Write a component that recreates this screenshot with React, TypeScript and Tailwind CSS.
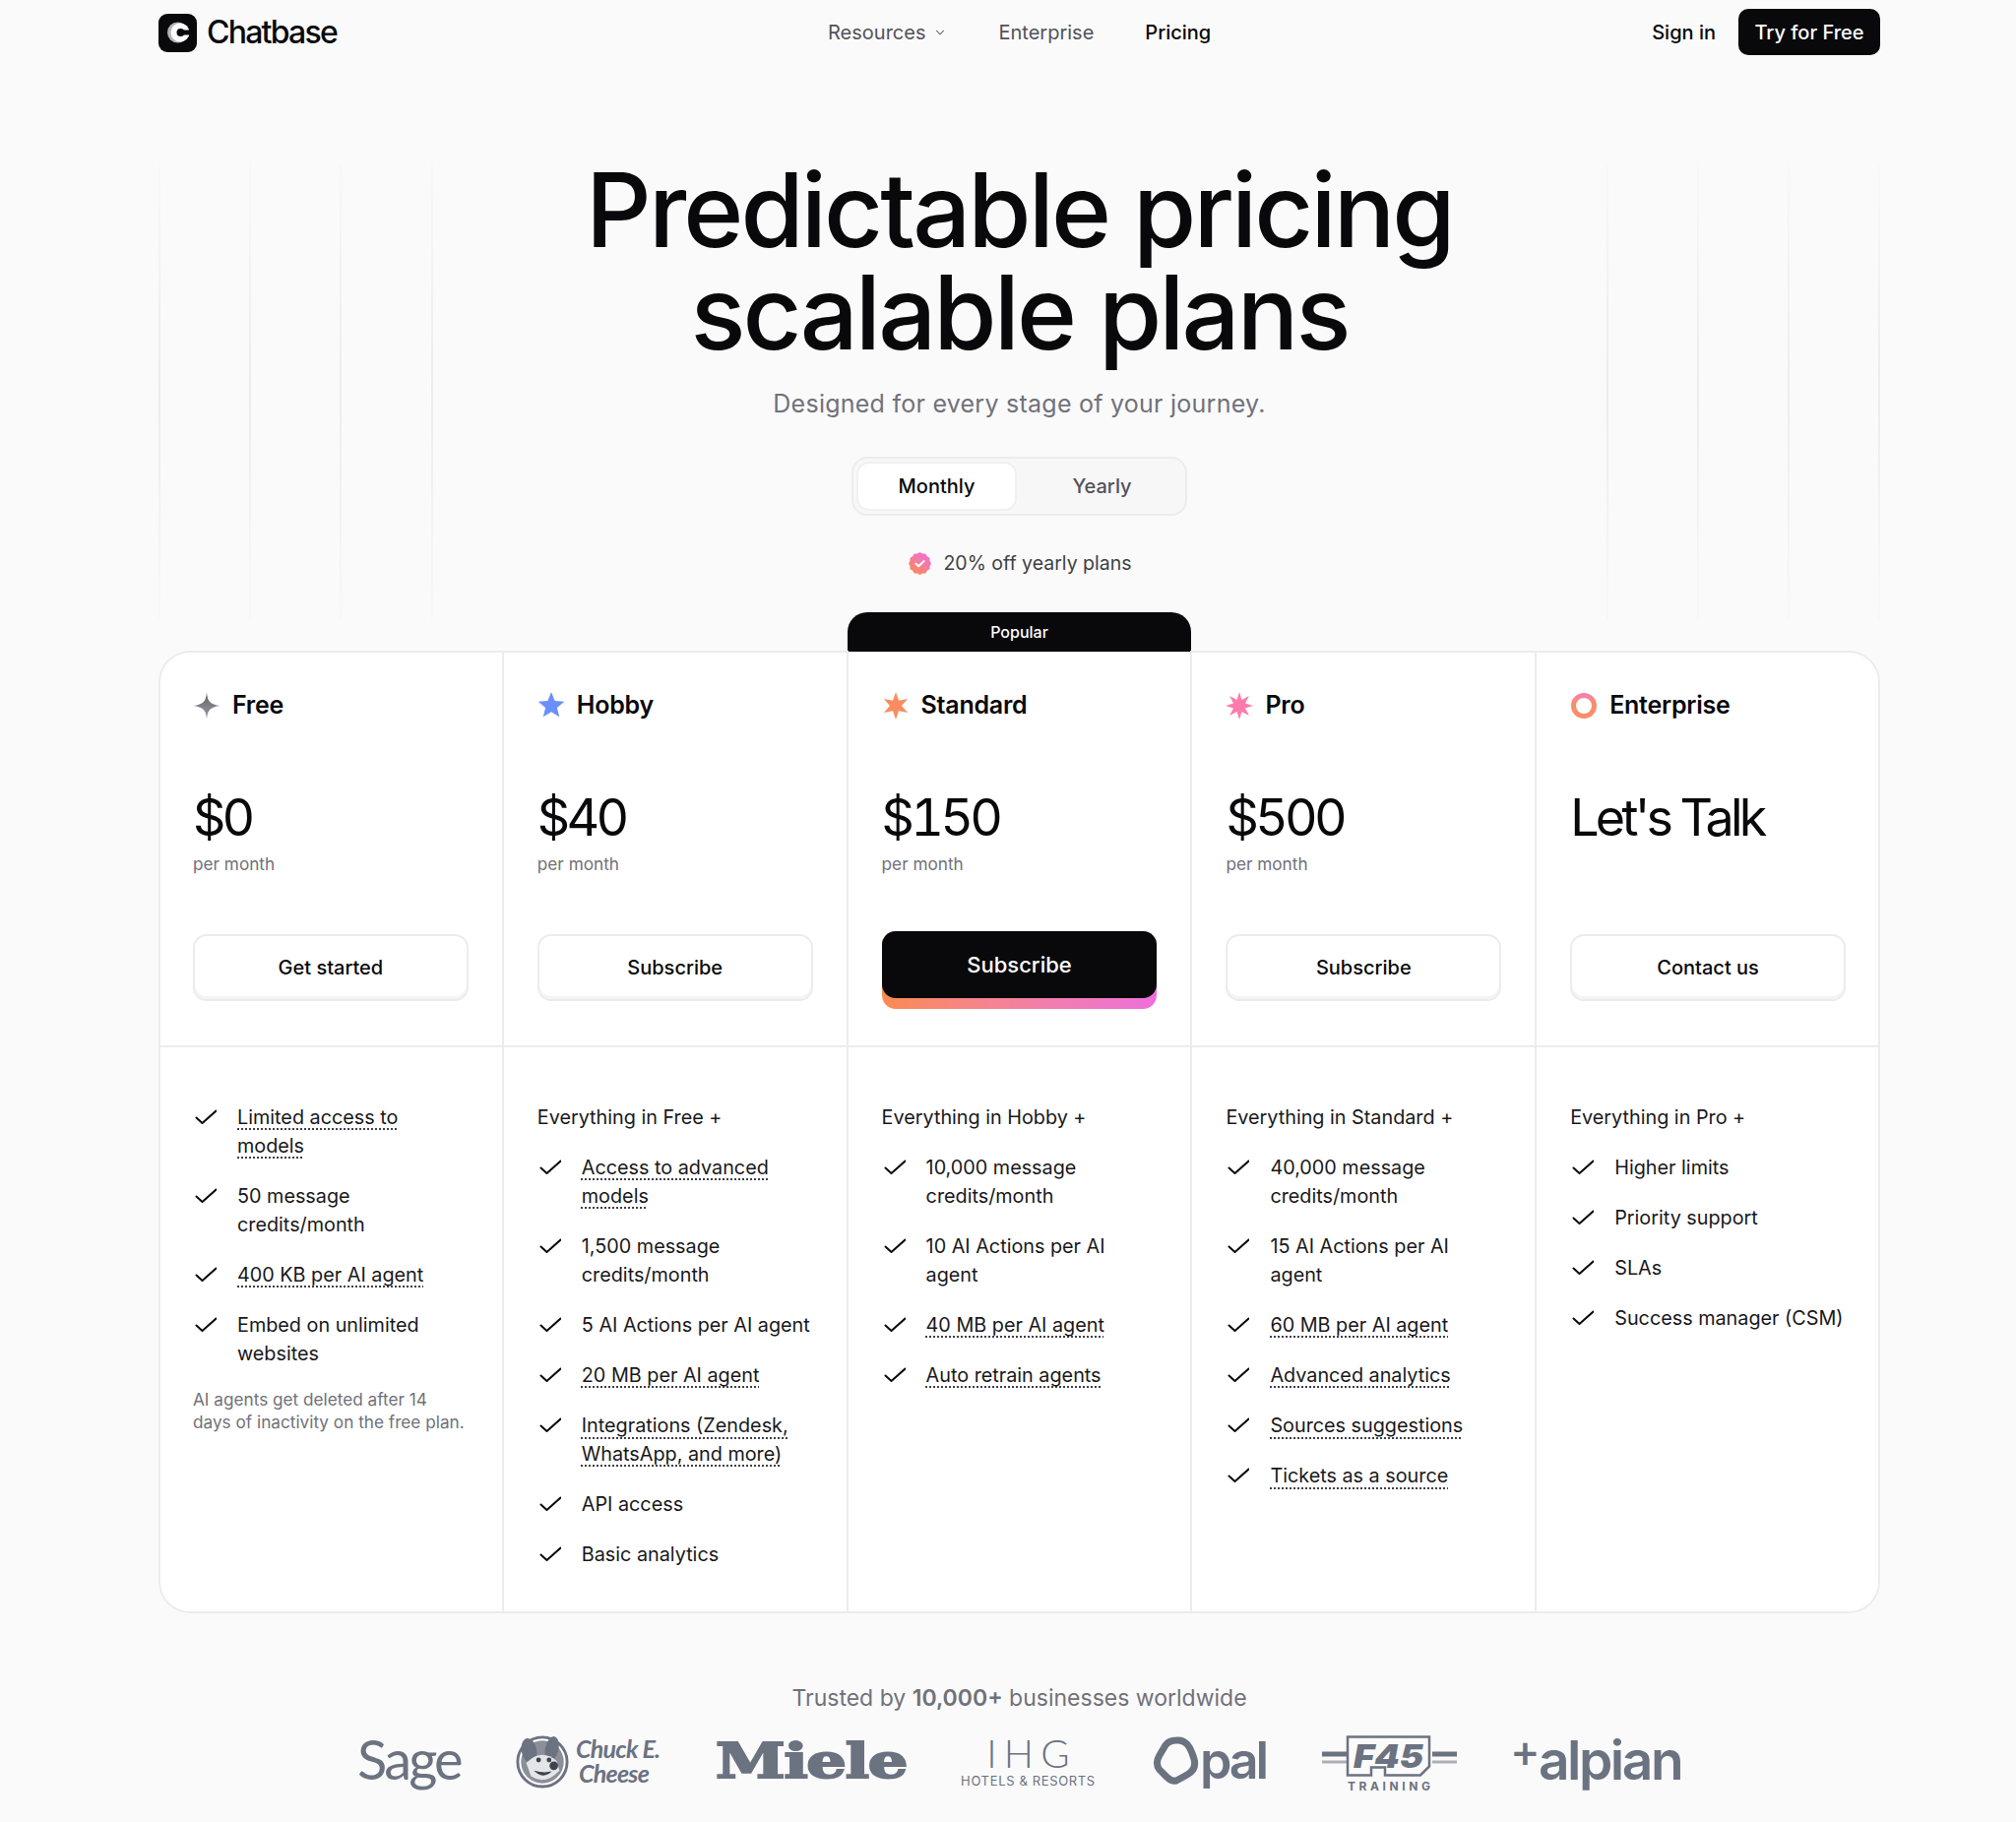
import { ChevronDown } from "lucide-react";

type Feature = { text: string; dotted?: boolean };

type Plan = {
  name: string;
  icon: React.ReactNode;
  price: string;
  perMonth: boolean;
  cta: string;
  popular?: boolean;
  lead?: string;
  features: Feature[];
  note?: string;
};

function starPoints(n: number, outer: number, inner: number) {
  const pts: string[] = [];
  for (let i = 0; i < n * 2; i++) {
    const r = i % 2 === 0 ? outer : inner;
    const a = (Math.PI * i) / n - Math.PI / 2;
    pts.push(`${(14 + r * Math.cos(a)).toFixed(2)},${(14 + r * Math.sin(a)).toFixed(2)}`);
  }
  return pts.join(" ");
}

function FreeIcon() {
  return (
    <svg width="28" height="28" viewBox="0 0 28 28">
      <defs>
        <linearGradient id="free-grad" x1="0" y1="0" x2="0" y2="1">
          <stop offset="0" stopColor="#5f6168" />
          <stop offset="1" stopColor="#9b9da3" />
        </linearGradient>
      </defs>
      <path d="M14 0.5 C15 10 17.5 12.5 27.5 14 C17.5 15.5 15 18 14 27.5 C13 18 10.5 15.5 0.5 14 C10.5 12.5 13 10 14 0.5Z" fill="url(#free-grad)" />
    </svg>
  );
}

function StarIcon({ n, inner, color }: { n: number; inner: number; color: string }) {
  return (
    <svg width="28" height="28" viewBox="0 0 28 28">
      <polygon points={starPoints(n, 14, inner)} fill={color} />
    </svg>
  );
}

function RingIcon() {
  return (
    <svg width="28" height="28" viewBox="0 0 28 28">
      <defs>
        <linearGradient id="ring-grad" x1="0" y1="0" x2="0" y2="1">
          <stop offset="0" stopColor="#f97fa6" />
          <stop offset="0.4" stopColor="#fb8d68" />
        </linearGradient>
      </defs>
      <circle cx="14" cy="14" r="10.5" fill="none" stroke="url(#ring-grad)" strokeWidth="5" />
    </svg>
  );
}

function CheckMark() {
  return (
    <svg className="mt-[2px] shrink-0" width="24" height="24" viewBox="0 0 24 24" fill="none" stroke="#09090b" strokeWidth="2" strokeLinecap="round" strokeLinejoin="round">
      <path d="M3.5 12.5 9.5 18 23.5 5.5" />
    </svg>
  );
}

function Badge() {
  return (
    <svg width="23" height="23" viewBox="0 0 23 23">
      <defs>
        <linearGradient id="badge-grad" x1="0.8" y1="0" x2="0.2" y2="1">
          <stop offset="0" stopColor="#ef6fe0" />
          <stop offset="1" stopColor="#fb8a50" />
        </linearGradient>
      </defs>
      <polygon points={Array.from({ length: 24 }, (_, i) => {
        const r = i % 2 === 0 ? 11.5 : 10.4;
        const a = (Math.PI * i) / 12;
        return `${(11.5 + r * Math.cos(a)).toFixed(2)},${(11.5 + r * Math.sin(a)).toFixed(2)}`;
      }).join(" ")} fill="url(#badge-grad)" />
      <path d="M7.5 11.8 10.2 14.3 15.6 9" fill="none" stroke="#fff" strokeWidth="2" strokeLinecap="round" strokeLinejoin="round" />
    </svg>
  );
}

const plans: Plan[] = [
  {
    name: "Free",
    icon: <FreeIcon />,
    price: "$0",
    perMonth: true,
    cta: "Get started",
    features: [
      { text: "Limited access to models", dotted: true },
      { text: "50 message credits/month" },
      { text: "400 KB per AI agent", dotted: true },
      { text: "Embed on unlimited websites" },
    ],
    note: "AI agents get deleted after 14 days of inactivity on the free plan.",
  },
  {
    name: "Hobby",
    icon: <StarIcon n={5} inner={6.2} color="#6a8ffb" />,
    price: "$40",
    perMonth: true,
    cta: "Subscribe",
    lead: "Everything in Free +",
    features: [
      { text: "Access to advanced models", dotted: true },
      { text: "1,500 message credits/month" },
      { text: "5 AI Actions per AI agent" },
      { text: "20 MB per AI agent", dotted: true },
      { text: "Integrations (Zendesk, WhatsApp, and more)", dotted: true },
      { text: "API access" },
      { text: "Basic analytics" },
    ],
  },
  {
    name: "Standard",
    icon: <StarIcon n={6} inner={6} color="#fb8c60" />,
    price: "$150",
    perMonth: true,
    cta: "Subscribe",
    popular: true,
    lead: "Everything in Hobby +",
    features: [
      { text: "10,000 message credits/month" },
      { text: "10 AI Actions per AI agent" },
      { text: "40 MB per AI agent", dotted: true },
      { text: "Auto retrain agents", dotted: true },
    ],
  },
  {
    name: "Pro",
    icon: <StarIcon n={8} inner={6.5} color="#fb7cab" />,
    price: "$500",
    perMonth: true,
    cta: "Subscribe",
    lead: "Everything in Standard +",
    features: [
      { text: "40,000 message credits/month" },
      { text: "15 AI Actions per AI agent" },
      { text: "60 MB per AI agent", dotted: true },
      { text: "Advanced analytics", dotted: true },
      { text: "Sources suggestions", dotted: true },
      { text: "Tickets as a source", dotted: true },
    ],
  },
  {
    name: "Enterprise",
    icon: <RingIcon />,
    price: "Let's Talk",
    perMonth: false,
    cta: "Contact us",
    lead: "Everything in Pro +",
    features: [
      { text: "Higher limits" },
      { text: "Priority support" },
      { text: "SLAs" },
      { text: "Success manager (CSM)" },
    ],
  },
];

const heroLines = ["left-0", "left-[92px]", "left-[184px]", "left-[277px]", "right-[276px]", "right-[184px]", "right-[92px]", "right-0"];

function Nav() {
  return (
    <header className="flex h-[66px] items-center">
      <div className="flex items-center gap-[10px]">
        <div className="flex h-[39px] w-[39px] items-center justify-center rounded-[9px] bg-[#09090b]">
          <svg width="26" height="26" viewBox="0 0 26 26" fill="none">
            <circle cx="12.5" cy="13" r="10.5" fill="#b4b4b8" />
            <circle cx="15" cy="13" r="9.5" fill="#fff" />
            <circle cx="15.5" cy="13" r="4" fill="#09090b" />
            <path d="M19 10.5h7v5h-7Z" fill="#09090b" />
          </svg>
        </div>
        <span className="text-[32px] font-medium leading-none tracking-[-0.055em] text-[#09090b]">Chatbase</span>
      </div>
      <nav className="ml-[499px] flex items-center gap-[52px] text-[20px] text-[#52525b]">
        <span className="flex items-center gap-2">
          Resources
          <ChevronDown size={14} strokeWidth={1.75} />
        </span>
        <span>Enterprise</span>
        <span className="font-medium text-[#09090b]">Pricing</span>
      </nav>
      <div className="-mt-[1px] ml-auto flex items-center gap-[23px]">
        <span className="text-[20px] font-medium text-[#09090b]">Sign in</span>
        <span className="flex h-[47px] w-[144px] items-center justify-center rounded-[10px] bg-[#09090b] text-[20px] font-medium text-white">
          Try for Free
        </span>
      </div>
    </header>
  );
}

function Hero() {
  return (
    <section className="relative flex h-[595px] flex-col items-center">
      {heroLines.map((pos) => (
        <div key={pos} className={`absolute top-[99px] h-[465px] w-[2px] bg-gradient-to-b from-[#f8f8f8] via-[#ececec] to-[#f8f8f8] ${pos}`} />
      ))}
      <h1 className="relative mt-[95px] text-center text-[104px] font-medium leading-[104px] tracking-[-0.028em] text-[#09090b]">
        Predictable pricing
        <br />
        scalable plans
      </h1>
      <p className="relative mt-[23px] text-[25px] leading-[36px] tracking-[0.01em] text-[#71717a]">
        Designed for every stage of your journey.
      </p>
      <div className="relative mt-[36px] flex h-[60px] w-[341px] rounded-[16px] border-2 border-[#ececee] bg-[#f7f7f8] p-[3px] text-[20px] font-medium">
        <div className="flex w-[163px] items-center justify-center rounded-[13px] border-2 border-[#f0f0f1] bg-white text-[#09090b]">Monthly</div>
        <div className="flex flex-1 items-center justify-center pl-[5px] text-[#52525b]">Yearly</div>
      </div>
      <div className="relative mt-[34px] flex items-center gap-[12px] pl-[2px] text-[19.5px] text-[#3f3f46]">
        <Badge />
        <span>20% off yearly plans</span>
      </div>
    </section>
  );
}

function FeatureRow({ feature }: { feature: Feature }) {
  return (
    <li className="flex gap-[21px]">
      <CheckMark />
      <span className={feature.dotted ? "underline decoration-dotted decoration-[#3f3f46] underline-offset-[5px]" : ""}>{feature.text}</span>
    </li>
  );
}

function PlanColumn({ plan, first }: { plan: Plan; first: boolean }) {
  return (
    <div className={`relative flex flex-col ${first ? "" : "-ml-[1px] border-l-2 border-[#ececee]"}`}>
      <div className={`h-[403px] border-b-2 border-[#ececee] pr-[35px] pt-[36px] ${first ? "pl-[35px]" : "pl-[34px]"}`}>
        <div className="flex h-[40px] items-center gap-[12px]">
          {plan.icon}
          <span className="text-[25px] font-semibold tracking-[-0.01em] text-[#09090b]">{plan.name}</span>
        </div>
        <div className="mt-[66px] h-[87px]">
          <div className="text-[52px] leading-[56px] text-[#09090b] tabular-nums tracking-[-0.072em]">{plan.price}</div>
          {plan.perMonth && <div className="mt-[7px] text-[17.2px] leading-[24px] text-[#71717a]">per month</div>}
        </div>
        {plan.popular ? (
          <div className="mt-[56px] h-[79px] rounded-[14px] bg-gradient-to-r from-[#fb8a50] to-[#ee6fdc]">
            <div className="flex h-[68px] items-center justify-center rounded-[14px] bg-[#09090b] text-[22px] font-medium text-white">{plan.cta}</div>
          </div>
        ) : (
          <div className="mt-[59px] flex h-[68px] items-center justify-center rounded-[14px] border-2 border-[#ececee] bg-white text-[20px] font-medium text-[#09090b] shadow-[inset_0_-3px_0_#f4f4f5]">
            {plan.cta}
          </div>
        )}
      </div>
      <div className={`pr-[33px] pt-[57px] text-[19.8px] leading-[28.8px] text-[#18181b] ${first ? "pl-[35px]" : "pl-[34px]"}`}>
        {plan.lead && <div className="mb-[22px]">{plan.lead}</div>}
        <ul className="flex flex-col gap-[22.4px]">
          {plan.features.map((f) => (
            <FeatureRow key={f.text} feature={f} />
          ))}
        </ul>
        {plan.note && <p className="mt-[20px] pr-[2px] text-[17.2px] leading-[23px] text-[#71717a]">{plan.note}</p>}
      </div>
    </div>
  );
}

function Pricing() {
  return (
    <section className="relative grid h-[978px] grid-cols-5 rounded-[32px] bg-white shadow-[inset_0_0_0_2px_#ececee]">
      <div className="absolute left-[700px] top-[-39px] flex h-[40px] w-[349px] items-center justify-center rounded-t-[20px] bg-[#09090b] text-[16px] font-medium text-white">
        Popular
      </div>
      {plans.map((plan, i) => (
        <PlanColumn key={plan.name} plan={plan} first={i === 0} />
      ))}
    </section>
  );
}

function ChuckLogo() {
  return (
    <div className="flex items-center gap-[6px]">
      <svg className="shrink-0" width="56" height="56" viewBox="0 0 58 56">
        <circle cx="29" cy="29" r="26" fill="#fff" stroke="#6b7280" strokeWidth="3" />
        <circle cx="29" cy="29" r="22.5" fill="#8b8f99" />
        <ellipse cx="15" cy="17" rx="8" ry="13" fill="#6b7280" transform="rotate(-10 15 17)" />
        <ellipse cx="39" cy="15" rx="7" ry="13" fill="#6b7280" transform="rotate(12 39 15)" />
        <path d="M12 30 Q28 14 44 28 L47 38 Q32 54 17 44Z" fill="#e4e5e8" />
        <circle cx="25" cy="27" r="2.5" fill="#3f434c" />
        <circle cx="36" cy="27" r="2.5" fill="#3f434c" />
        <circle cx="41" cy="33" r="4.5" fill="#3f434c" />
        <path d="M20 38 Q30 48 39 39 Q30 41 20 38Z" fill="#3f434c" />
      </svg>
      <div className="flex flex-col whitespace-nowrap font-[Lato,sans-serif] text-[25px] font-bold italic leading-[25px] tracking-[-0.03em]">
        <span>Chuck E.</span>
        <span className="ml-[3px]">Cheese</span>
      </div>
    </div>
  );
}

function F45Logo() {
  return (
    <svg width="137" height="60" viewBox="0 0 137 60">
      <path d="M0 19h25M112 19h25" stroke="#6b7280" strokeWidth="5" />
      <path d="M0 27h25M112 27h25" stroke="#adb0b6" strokeWidth="3" />
      <path d="M26 1.5h83v30l-9 9H64v-8H50v8H26Z" fill="none" stroke="#6b7280" strokeWidth="2.5" />
      <text x="32" y="33" textLength="71" lengthAdjust="spacingAndGlyphs" fontSize="33" fontWeight="900" fontStyle="italic" fill="#6b7280" fontFamily="Inter, sans-serif">F45</text>
      <text x="26" y="56" textLength="84" fontSize="12" fontWeight="700" fill="#6b7280" fontFamily="Inter, sans-serif">TRAINING</text>
    </svg>
  );
}

function Logos() {
  return (
    <section className="mt-[70px] flex flex-col items-center">
      <p className="text-[23px] leading-[32px] text-[#71717a]">
        Trusted by <span className="font-semibold">10,000+</span> businesses worldwide
      </p>
      <div className="mt-[18px] flex h-[60px] w-full items-center pl-[202px] text-[#6b7280]">
        <span className="mt-[-4px] w-[103px] font-[Lato,sans-serif] text-[56px] leading-none tracking-[-0.05em]">Sage</span>
        <div className="ml-[57px] w-[149px]"><ChuckLogo /></div>
        <div className="ml-[55px] w-[193px]">
          <span className="inline-block origin-left scale-x-[1.33] font-[DejaVu_Serif,serif] text-[48px] font-bold leading-none tracking-[-0.02em] [-webkit-text-stroke:2px_#6b7280]">Miele</span>
        </div>
        <div className="ml-[55px] flex w-[139px] flex-col items-center">
          <span className="ml-[7px] font-[Lato,sans-serif] text-[40px] font-light leading-[36px] tracking-[0.18em]">IHG</span>
          <span className="mt-[3px] whitespace-nowrap text-[13px] leading-[14px] tracking-[0.05em]">HOTELS &amp; RESORTS</span>
        </div>
        <div className="ml-[56px] flex w-[116px] items-center">
          <svg width="50" height="50" viewBox="0 0 50 50" className="shrink-0">
            <path d="M25 4 C34 3 39 9 43 23 C45 30 43 35 36 39 L25 45 C21 46 18 44 15 41 L8 34 C4 29 5 24 8 19 L14 9 C17 5 20 4 25 4Z" fill="none" stroke="#6b7280" strokeWidth="7" />
          </svg>
          <span className="-ml-[1px] text-[52px] font-semibold leading-none tracking-[-0.06em]">pal</span>
        </div>
        <div className="ml-[57px] mt-[8px]"><F45Logo /></div>
        <div className="ml-[54px] flex items-start whitespace-nowrap font-semibold leading-none">
          <span className="mt-[-8px] w-[29px] text-[46px] font-medium">+</span>
          <span className="mt-[-2px] text-[55px] tracking-[-0.045em]">alpian</span>
        </div>
      </div>
    </section>
  );
}

export default function App() {
  return (
    <div className="min-h-[1851px] overflow-hidden bg-[#fafafa] font-[Inter,sans-serif]">
      <div className="ml-[161px] w-[1749px]">
        <Nav />
        <Hero />
        <Pricing />
        <Logos />
      </div>
    </div>
  );
}
